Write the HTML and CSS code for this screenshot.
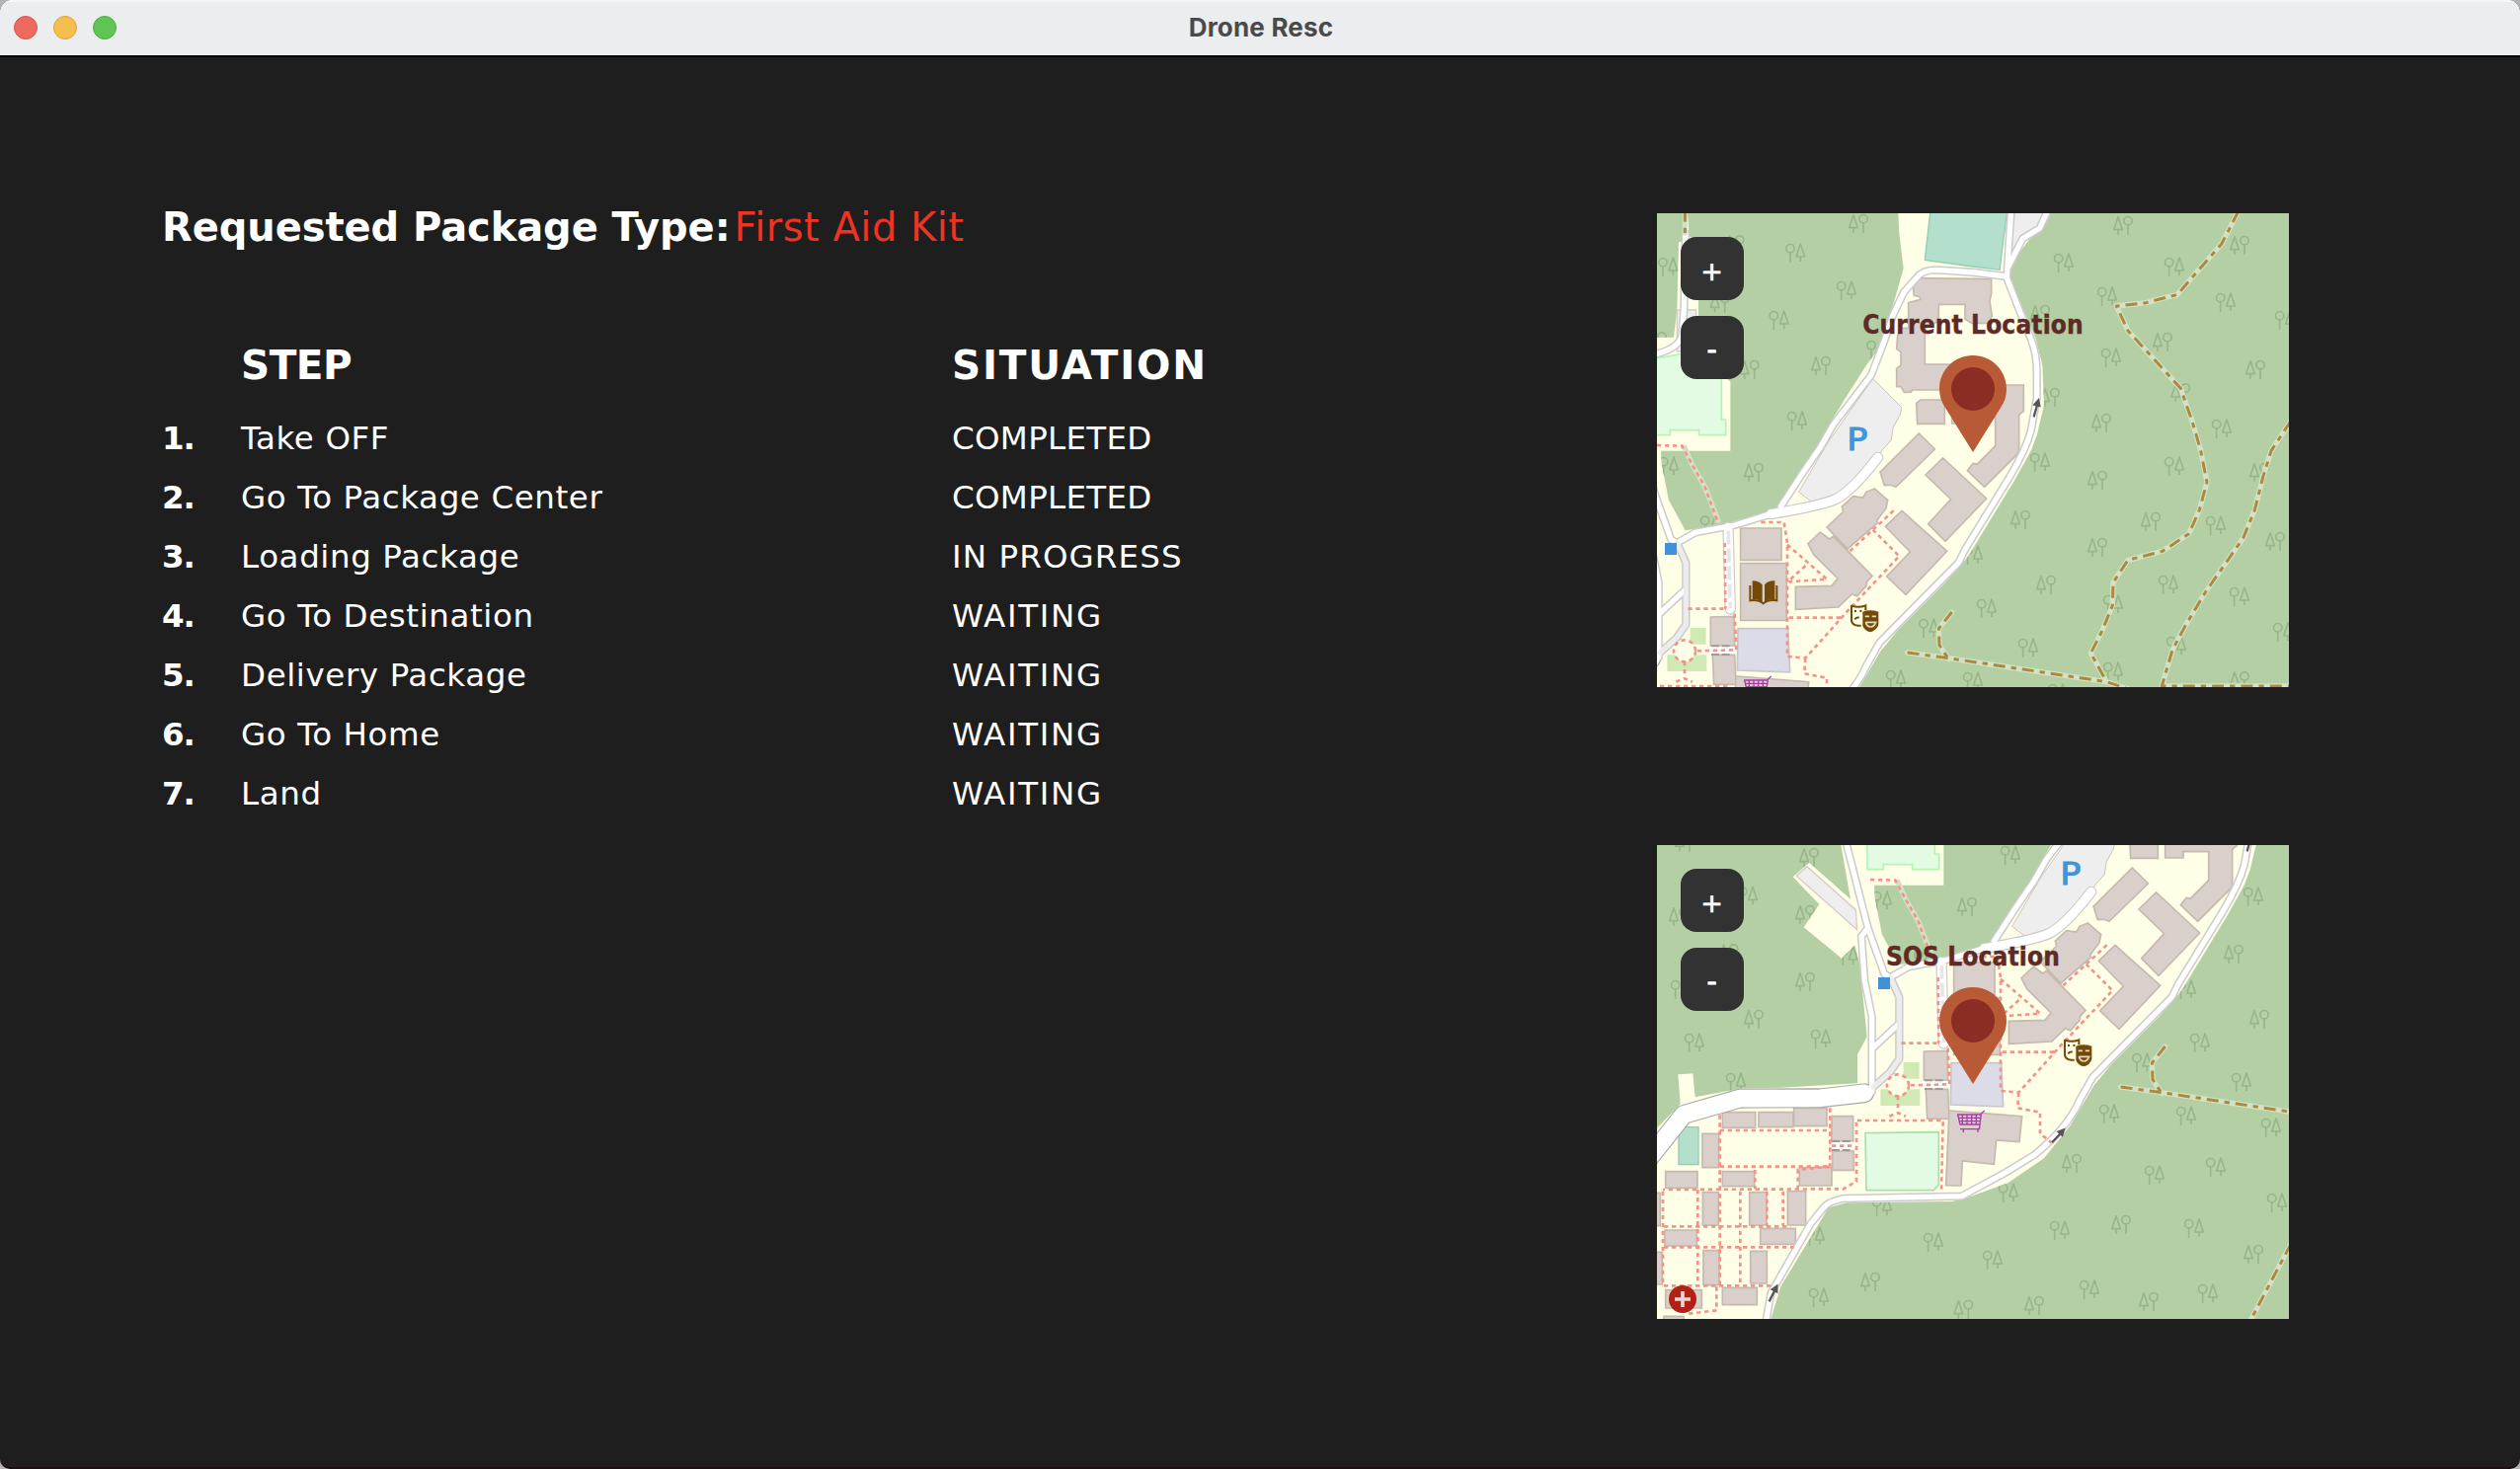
FILE: index.html
```html
<!DOCTYPE html>
<html lang="en">
<head>
<meta charset="utf-8">
<title>Drone Resc</title>
<link rel="stylesheet" href="styles.css">
</head>
<body>
<svg class="defs" width="0" height="0" aria-hidden="true">
  <defs>
    <g id="ta" class="tree"><circle cx="-16" cy="-13" r="12.5"/><path d="M-16 0V30M15 -27L2 12H28ZM15 12V27"/></g>
    <g id="tb" class="tree"><circle cx="15" cy="-13" r="12.5"/><path d="M15 0V30M-15 -25L-28 14H-2ZM-15 14V29"/></g>
    <path id="arrow" class="arrow" d="M0 -32L13 -6H4V28H-3V-6H-13Z"/>
    <path id="woods" d="M96 0H733L736 62 749 167 711 302 666 422 636 462 566 572 506 672 470 740 416 832 366 892 306 924 191 947 86 964 36 872 14 762 12 722H223V512L126 427V87L96 70ZM0 0H96L90 87H66L61 292 51 377H0ZM-648 600H-89L-60 764-185 654-235 697-155 780-202 850-87 944-47 904-32 962-10 1182-39 1237V1324L-272 1337-397 1340-532 1366-539 1294-584 1297-577 1387-648 1460ZM1191 0L1141 67 1086 140 1069 192 1096 252 1151 382 1171 462 1176 582 1155 672 1136 722 1086 812 946 1042 876 1122 736 1262 680 1330 608 1452 528 1552 418 1627 288 1674 248 1683-72 1687-127 1702-157 1752-272 1942-302 2040H1930V0Z"/>
    <clipPath id="woods-clip"><use href="#woods"/></clipPath>

    <symbol id="campus" overflow="visible">
      <rect class="ground" x="-648" y="0" width="2570" height="2040"/>
      <use href="#woods" class="woods"/>
      <g clip-path="url(#woods-clip)">
        <g transform="translate(-24 -18)">
          <use href="#ta" x="58" y="180"/><use href="#ta" x="445" y="138"/><use href="#ta" x="395" y="342"/><use href="#ta" x="600" y="252"/><use href="#ta" x="450" y="648"/><use href="#ta" x="691" y="432"/>
          <use href="#tb" x="636" y="48"/><use href="#tb" x="260" y="112"/><use href="#tb" x="215" y="290"/><use href="#tb" x="305" y="492"/><use href="#tb" x="522" y="480"/><use href="#tb" x="24" y="406"/>
        </g>
        <g transform="translate(936 -18)">
          <use href="#tb" x="480" y="54"/><use href="#tb" x="834" y="114"/><use href="#tb" x="228" y="324"/><use href="#tb" x="600" y="408"/><use href="#tb" x="882" y="492"/><use href="#tb" x="258" y="576"/><use href="#tb" x="655" y="562"/><use href="#tb" x="414" y="654"/>
          <use href="#ta" x="300" y="168"/><use href="#ta" x="636" y="180"/><use href="#ta" x="432" y="270"/><use href="#ta" x="792" y="288"/><use href="#ta" x="972" y="342"/><use href="#ta" x="444" y="456"/><use href="#ta" x="780" y="672"/>
        </g>
        <g transform="translate(-24 702)">
          <use href="#ta" x="60" y="66"/><use href="#ta" x="186" y="245"/><use href="#ta" x="850" y="558"/><use href="#ta" x="750" y="714"/><use href="#ta" x="984" y="720"/><use href="#tb" x="318" y="84"/>
        </g>
        <g transform="translate(936 702)">
          <use href="#ta" x="228" y="54"/><use href="#ta" x="636" y="66"/><use href="#ta" x="762" y="246"/><use href="#ta" x="24" y="336"/><use href="#ta" x="618" y="426"/><use href="#ta" x="834" y="462"/><use href="#ta" x="66" y="498"/><use href="#ta" x="450" y="486"/><use href="#ta" x="966" y="570"/><use href="#ta" x="642" y="612"/><use href="#ta" x="192" y="618"/><use href="#ta" x="450" y="690"/><use href="#ta" x="282" y="756"/>
          <use href="#tb" x="402" y="108"/><use href="#tb" x="894" y="84"/><use href="#tb" x="168" y="228"/><use href="#tb" x="564" y="234"/><use href="#tb" x="402" y="312"/><use href="#tb" x="942" y="294"/><use href="#tb" x="246" y="426"/><use href="#tb" x="834" y="718"/>
        </g>
        <g transform="translate(-672 582)">
          <use href="#ta" x="300" y="172"/><use href="#ta" x="138" y="618"/><use href="#ta" x="522" y="606"/><use href="#ta" x="264" y="738"/><use href="#ta" x="96" y="456"/><use href="#ta" x="605" y="354"/>
          <use href="#tb" x="486" y="54"/><use href="#tb" x="474" y="228"/><use href="#tb" x="108" y="8"/><use href="#tb" x="90" y="234"/><use href="#tb" x="242" y="346"/><use href="#tb" x="474" y="432"/><use href="#tb" x="318" y="546"/>
        </g>
        <g transform="translate(288 1302)">
          <use href="#tb" x="324" y="264"/><use href="#tb" x="474" y="450"/><use href="#tb" x="876" y="540"/><use href="#tb" x="210" y="696"/><use href="#tb" x="558" y="684"/>
          <use href="#ta" x="576" y="300"/><use href="#ta" x="762" y="276"/><use href="#ta" x="132" y="354"/><use href="#ta" x="288" y="468"/><use href="#ta" x="948" y="384"/><use href="#ta" x="696" y="462"/><use href="#ta" x="84" y="558"/><use href="#ta" x="378" y="648"/><use href="#ta" x="738" y="660"/>
        </g>
        <g transform="translate(-672 1302)">
          <use href="#ta" x="708" y="396"/><use href="#ta" x="864" y="504"/><use href="#ta" x="516" y="672"/><use href="#ta" x="504" y="486"/><use href="#tb" x="672" y="624"/><use href="#tb" x="955" y="708"/>
        </g>
      </g>

      <!-- pitches, lawns and parking -->
      <path class="court" d="M831 -10L814 142 960 162 1041 172 1064 -10Z"/>
      <path class="court" d="M-582 1457H-522V1571H-582Z"/>
      <path class="pitch" d="M-9 442L76 427H196V627H209V674H128V659H40V674H-9Z"/>
      <path class="pitch field" d="M-15 1475L208 1472V1632L193 1649H-12Z"/>
      <path class="lawn" d="M101 1260h48v50h-48zM31 1342h120v50h-120z"/>
      <circle class="ground" cx="84" cy="1330" r="32"/>
      <path class="lot" d="M61 294H119V420H61Z"/>
      <path class="parking" d="M656 502L743 590 739 612 718 650 711 690 656 752 576 842 476 882 431 847 516 702Z"/>
      <path class="parking" d="M1081 -5H1176L1151 50 1111 72 1070 145Z"/>
      <path class="lot" d="M-192 665L-44 797-40 857-224 694Z"/>
      <text class="parking-sign" transform="translate(577 719) scale(1.12 1)">P</text>

      <!-- buildings -->
      <g class="building">
        <path transform="translate(-24 -18)" d="M800 215L1040 218V262L1035 285 1042 330 1030 352H980L960 340V295H880V345L838 368V477H925L960 555H800L795 562H775L765 545H752V490L765 480V440L752 430 755 390 765 367H788V290L825 280 822 272 805 268ZM825 585H898V658H815L812 595Z"/>
        <g transform="translate(-24 702)">
          <path d="M820 -33L868 15 750 130 735 124 715 125 702 85ZM893 42L1025 165 900 295 848 242 917 167 840 93ZM768 202L905 325 780 457 722 402 793 327 718 250ZM540 252L590 205 586 190 620 158 650 162 660 145 685 135 725 170 720 195 693 230 693 240 603 318ZM520 267L483 302 500 335 573 408 555 430 445 433V502L575 495 617 455 632 462 660 430 662 418 678 400 560 280 548 288ZM278 255H402V352H278ZM278 362H418V535H278ZM187 525L258 523 260 612H187ZM193 640H260L264 730H197Z"/>
          <path class="hall" d="M270 560H422L428 693 268 687Z"/>
        </g>
        <path transform="translate(288 582)" d="M700 -60H826V20L812 30V145L707 250 655 200 672 178 685 180 740 125V38H663V57H608V-10H640Z"/>
        <path transform="translate(-672 1302)" d="M912 105L1133 122 1125 200 1055 195 1048 268 952 258 948 333 902 332ZM223 110h100v47h-100zM333 110h105v45h-105zM440 97h100v55h-100zM555 122h65v75h-65zM557 228h65v58h-65zM162 175h50v103h-50zM50 290h97v50h-97zM223 290h97v45h-97zM457 278h98v55h-98zM10 355h24v100h-24zM163 353h48v100h-48zM305 353h52v100h-52zM421 350h55v103h-55zM48 468h97v48h-97zM338 463h107v48h-107zM10 535h30v98h-30zM165 530h48v105h-48zM308 532h50v98h-50zM223 643h105v52h-105zM50 650h110v55h-110zM45 730h60v30h-60z"/>
      </g>

      <!-- roads: casing first, then the white surface -->
      <g class="casing">
        <path d="M1076 -10L1063 192M1188 -10L1163 45 1111 77 1066 165M1061 192L966 180 850 172Q806 172 790 195L750 240 716 312 690 390 651 492 536 642 496 712 441 792 376 892"/>
        <path d="M1061 192L1096 282 1136 382Q1156 430 1154 500V562L1136 662Q1120 720 1071 802L936 1022 916 1062 676 1305 638 1372Q600 1460 498 1542L408 1597 278 1667-82 1674Q-130 1684-142 1702L-182 1752-302 1962-317 2050"/>
        <path d="M346 914L236 948 116 970 61 1002M87 62L82 292 76 372Q66 410 0 427"/>
        <path d="M-74 590L-7 852 43 992 61 1002 88 1062V1250L60 1290 10 1335M-7 852L-27 877-17 1012 5 1122V1350M88 1142L8 1217"/>
        <path class="wide" d="M671 742Q590 848 540 870 496 889 346 914"/>
        <path class="wide" d="M216 955L223 1203"/>
        <path class="main" d="M-690 1574L-567 1419-397 1370-152 1369-18 1354"/>
      </g>
      <g class="surface">
        <path d="M1076 -10L1063 192M1188 -10L1163 45 1111 77 1066 165M1061 192L966 180 850 172Q806 172 790 195L750 240 716 312 690 390 651 492 536 642 496 712 441 792 376 892"/>
        <path d="M1061 192L1096 282 1136 382Q1156 430 1154 500V562L1136 662Q1120 720 1071 802L936 1022 916 1062 676 1305 638 1372Q600 1460 498 1542L408 1597 278 1667-82 1674Q-130 1684-142 1702L-182 1752-302 1962-317 2050"/>
        <path d="M346 914L236 948 116 970 61 1002M87 62L82 292 76 372Q66 410 0 427"/>
        <path d="M-74 590L-7 852 43 992 61 1002M-7 852L-27 877-17 1012 5 1122V1350M88 1142L8 1217"/>
        <path class="service" d="M61 1002L88 1062V1250L60 1290 10 1335"/>
        <path class="wide" d="M671 742Q590 848 540 870 496 889 346 914"/>
        <path class="wide" d="M216 955L223 1203"/>
        <path class="main" d="M-690 1574L-567 1419-397 1370-152 1369-18 1354"/>
      </g>
      <path class="walk" d="M217 965L223 1200"/>
      <path class="passage" d="M165 1315H228M165 1341H228M-117 1500H-52M-117 1527H-52"/>
      <path class="passage-floor" d="M150 1328H240M-122 1514H-46"/>

      <!-- footpaths -->
      <path class="halo" d="M84 712L106 762 146 832 186 935"/>
      <g class="foot">
        <g transform="translate(-24 702)">
          <path d="M24 3L100 5 130 60 170 130 210 240M340 237H410L420 300V645L475 650 600 510 760 340 680 260M610 325L750 195M420 305L540 410 425 418M430 410L480 365M425 527H590M475 650L472 697 540 710V775L575 802M118 500H232M230 300L232 500M260 515L265 625 140 628M108 660V705M82 722L108 712 132 722M-15 735H245L240 950"/>
          <circle cx="108" cy="628" r="33"/>
        </g>
        <path transform="translate(-672 1302)" d="M215 118V635M215 165H550M550 97V275M215 275H550L452 285V345M555 212H625M630 140V320L590 343 42 345M42 350V640M148 345V635M277 350V635M322 285V343M358 350V455M407 350V455M45 457H430M45 520H440M45 637H380M205 640V712L120 722"/>
      </g>

      <!-- forest tracks -->
      <g class="halo">
        <path d="M1766 -5L1716 92 1581 247 1486 272 1396 282 1431 357 1591 532 1626 632 1651 717 1671 817 1648 902 1616 974 1536 1027 1431 1054 1386 1122 1384 1192 1351 1272 1318 1337 1366 1424"/>
        <path d="M1925 632L1866 722 1841 802 1816 902 1781 987 1666 1152 1606 1252 1566 1327 1534 1437H1925"/>
        <path d="M761 1335L886 1352 1366 1424 1430 1445M896 1212L856 1262 858 1312 886 1355M1278 1812L1155 2045M85 -10V60"/>
      </g>
      <g class="track">
        <path d="M1766 -5L1716 92 1581 247 1486 272 1396 282 1431 357 1591 532 1626 632 1651 717 1671 817 1648 902 1616 974 1536 1027 1431 1054 1386 1122 1384 1192 1351 1272 1318 1337 1366 1424"/>
        <path d="M1925 632L1866 722 1841 802 1816 902 1781 987 1666 1152 1606 1252 1566 1327 1534 1437H1925"/>
        <path d="M761 1335L886 1352 1366 1424 1430 1445M896 1212L856 1262 858 1312 886 1355M1278 1812L1155 2045M85 -10V60"/>
      </g>

      <use href="#arrow" transform="translate(1152 592) rotate(16)"/>
      <use href="#arrow" transform="translate(571 1483) rotate(43)"/>
      <use href="#arrow" transform="translate(-295 1962) rotate(27)"/>

      <!-- points of interest -->
      <rect class="stop" x="24" y="1002" width="36" height="36"/>
      <g transform="translate(281 1117)">
        <path class="poi" d="M9 0Q28 -1 39 12V66Q26 54 9 56ZM77 0Q56 -1 46 12V66Q60 54 77 56Z"/>
        <path class="poi-line" d="M2 14V60Q28 56 42 69 56 56 83 60V14"/>
      </g>
      <g transform="translate(588 1189)">
        <path class="poi-line" d="M3 2V48Q4 62 22 64H32M3 3Q24 12 46 3V18M12 20H18M28 20H34M13 45Q18 38 26 40"/>
        <path class="poi" d="M37 22Q60 14 85 22V62Q80 78 61 84 42 80 37 64Z"/>
        <path class="poi-cut" d="M44 36H57M65 36H78M46 54H77Q72 68 61 68 50 68 46 54"/>
      </g>
      <path class="cart" transform="translate(263 1407)" d="M84 0L74 9 68 58M1 12H74M3 12L10 42H69M4 22H72M7 32H70M17 12V42M31 12V42M45 12V42M59 12V42M10 56H68M20 56V66M64 56V66"/>
      <g transform="translate(-570 1980)">
        <circle class="aid" r="42"/>
        <path class="aid-cross" d="M-24 0H24M0 -24V24"/>
      </g>
    </symbol>

    <symbol id="pin" viewBox="0 0 68 98">
      <path class="pin-body" d="M34 0C53 0 68 15 68 34 68 41 66 47 62 53L34 98 6 53C2 47 0 41 0 34 0 15 15 0 34 0Z"/>
      <circle class="pin-core" cx="34" cy="34" r="22"/>
    </symbol>
  </defs>
</svg>

<div class="window">
  <header class="titlebar">
    <div class="lights"><i class="light close"></i><i class="light minimize"></i><i class="light zoom"></i></div>
    <h1 class="title">Drone Resc</h1>
  </header>
  <main class="content">
    <section class="mission">
      <p class="package"><strong>Requested Package Type:</strong><span class="kind">First Aid Kit</span></p>
      <div class="steps">
        <div class="row head"><span></span><span>STEP</span><span class="heading-wide">SITUATION</span></div>
        <div class="row"><b>1.</b><span>Take OFF</span><span class="state">COMPLETED</span></div>
        <div class="row"><b>2.</b><span>Go To Package Center</span><span class="state">COMPLETED</span></div>
        <div class="row"><b>3.</b><span>Loading Package</span><span class="state active">IN PROGRESS</span></div>
        <div class="row"><b>4.</b><span>Go To Destination</span><span class="state waiting">WAITING</span></div>
        <div class="row"><b>5.</b><span>Delivery Package</span><span class="state waiting">WAITING</span></div>
        <div class="row"><b>6.</b><span>Go To Home</span><span class="state waiting">WAITING</span></div>
        <div class="row"><b>7.</b><span>Land</span><span class="state waiting">WAITING</span></div>
      </div>
    </section>
    <aside class="maps">
      <div class="map">
        <svg class="tiles" viewBox="0 0 1920 1440"><use href="#campus"/></svg>
        <div class="marker"><span class="label">Current Location</span><svg class="pin"><use href="#pin"/></svg></div>
        <div class="controls"><button class="ctl">+</button><button class="ctl minus">-</button></div>
      </div>
      <div class="map">
        <svg class="tiles" viewBox="-648 600 1920 1440"><use href="#campus"/></svg>
        <div class="marker"><span class="label">SOS Location</span><svg class="pin"><use href="#pin"/></svg></div>
        <div class="controls"><button class="ctl">+</button><button class="ctl minus">-</button></div>
      </div>
    </aside>
  </main>
</div>
</body>
</html>
```
FILE: styles.css
```css
* { box-sizing: border-box; }
body {
  margin: 0;
  background: #b4b4b6;
  font-family: "DejaVu Sans", Verdana, sans-serif;
  color: #fff;
}
.defs { position: absolute; }
.window {
  display: flex;
  flex-direction: column;
  width: 2552px;
  height: 1488px;
  border-radius: 12px 12px 10px 10px;
  overflow: hidden;
  background: #1e1e1e;
  border-bottom: 2px solid #1c0f16;
}
.titlebar {
  display: grid;
  grid-template-columns: 1fr auto 1fr;
  align-items: center;
  height: 58px;
  padding: 0 14px 2px;
  background: #ebedef;
  border-top: 2px solid #f6f6f7;
  border-bottom: 2px solid #000;
}
.lights { display: flex; gap: 16px; }
.light { width: 24px; height: 24px; border-radius: 50%; border: 1px solid; }
.close { background: #ed6a5f; border-color: #d9544a; }
.minimize { background: #f5bf4f; border-color: #dba43a; }
.zoom { background: #61c555; border-color: #4eac42; }
.title {
  margin: 0;
  padding-left: 2px;
  font: 700 26px/32px Inter, sans-serif;
  letter-spacing: 0.2px;
  color: #4a4a4b;
}
.content {
  display: flex;
  justify-content: space-between;
  padding: 158px 234px 0 164px;
}
.package {
  display: flex;
  gap: 4px;
  margin: -10px 0 0;
  font-size: 40px;
  line-height: 48px;
  white-space: nowrap;
}
.package strong { letter-spacing: -0.08px; }
.kind { color: #ee3322; letter-spacing: 0.5px; }
.steps { margin-top: 76px; }
.row {
  display: grid;
  grid-template-columns: 80px 720px auto;
  height: 60px;
  font-size: 32.5px;
  line-height: 60px;
  letter-spacing: 0.6px;
  white-space: nowrap;
}
.row b { letter-spacing: -1px; }
.row .state { letter-spacing: 0.3px; }
.row .active { letter-spacing: 1.1px; }
.row .waiting { letter-spacing: 1.7px; }
.row.head {
  height: 84px;
  font-size: 40.5px;
  font-weight: 700;
  line-height: 80px;
  letter-spacing: -0.5px;
}
.row .heading-wide { letter-spacing: 1.8px; }
.maps { display: flex; flex-direction: column; gap: 160px; }
.map { position: relative; width: 640px; height: 480px; overflow: hidden; }
.tiles { display: block; width: 640px; height: 480px; }
.marker {
  position: absolute;
  left: 0;
  right: 0;
  top: 97px;
  display: flex;
  flex-direction: column;
  align-items: center;
  gap: 15px;
}
.label {
  font: 700 26px/32px "DejaVu Sans Condensed", "DejaVu Sans", sans-serif;
  letter-spacing: 0.15px;
  color: #5e2a26;
  -webkit-text-stroke: 0.4px #5e2a26;
}
.pin { width: 68px; height: 98px; }
.controls {
  position: absolute;
  left: 24px;
  top: 24px;
  display: flex;
  flex-direction: column;
  gap: 16px;
}
.ctl {
  width: 64px;
  height: 64px;
  padding: 6px 1px 0 0;
  border: 0;
  border-radius: 16px;
  background: #323232;
  color: #fff;
  font: 27px/30px "DejaVu Sans", sans-serif;
  -webkit-text-stroke: 0.6px #fff;
}
.minus { padding-top: 4px; -webkit-text-stroke: 1.2px #fff; }

/* map drawing */
.ground { fill: #fffee6; }
.woods { fill: #b4cfa4; }
.tree { fill: none; stroke: #97b788; stroke-width: 5; stroke-linejoin: round; }
.court { fill: #b5dfcd; stroke: #90cdb4; stroke-width: 4; }
.pitch { fill: #e3fbe3; stroke: #b2f6b0; stroke-width: 5; }
.field { stroke: #a9dfa9; }
.lawn { fill: #d1eab5; }
.lot { fill: #eeeeee; stroke: #d8cbc8; stroke-width: 4; }
.parking { fill: #eeeeee; stroke: #cfc4bf; stroke-width: 3; }
.parking-sign { font: 94px "DejaVu Sans", sans-serif; fill: #3f95dc; stroke: #3f95dc; stroke-width: 3; }
.building { fill: #d9d0cb; stroke: #c6b9ad; stroke-width: 5; }
.hall { fill: #dcdce8; stroke: #c9c6c8; }
.casing, .surface { fill: none; stroke-linecap: round; stroke-linejoin: round; }
.casing { stroke: #cbcbcb; stroke-width: 25; }
.surface { stroke: #fff; stroke-width: 16; }
.service { stroke: #ececec; }
.casing .wide { stroke-width: 34; }
.surface .wide { stroke-width: 27; }
.casing .main { stroke: #a9a9a9; stroke-width: 60; }
.surface .main { stroke-width: 53; }
.walk { fill: none; stroke: #e6e6e6; stroke-width: 11; stroke-dasharray: 42 12; }
.passage { fill: none; stroke: #9e9a98; stroke-width: 6; stroke-dasharray: 24 8; }
.passage-floor { stroke: #fff; stroke-width: 16; }
.foot { fill: none; stroke: #f4938a; stroke-width: 8; stroke-dasharray: 13 11; }
.halo { fill: none; stroke: #d3e2c6; stroke-width: 16; stroke-linejoin: round; stroke-linecap: round; }
.track { fill: none; stroke: #ab8a40; stroke-width: 9; stroke-dasharray: 36 18 16 18; stroke-linejoin: round; }
.arrow { fill: #555; }
.stop { fill: #3f92d8; }
.poi { fill: #734a08; }
.poi-line { fill: none; stroke: #734a08; stroke-width: 6; }
.poi-cut { fill: none; stroke: #e5d8bd; stroke-width: 5; }
.cart { fill: none; stroke: #ac39ac; stroke-width: 4; }
.aid { fill: #b32015; }
.aid-cross { stroke: #e3d8d2; stroke-width: 11; }
.pin-body { fill: #b85a36; }
.pin-core { fill: #8b2d24; }
```
